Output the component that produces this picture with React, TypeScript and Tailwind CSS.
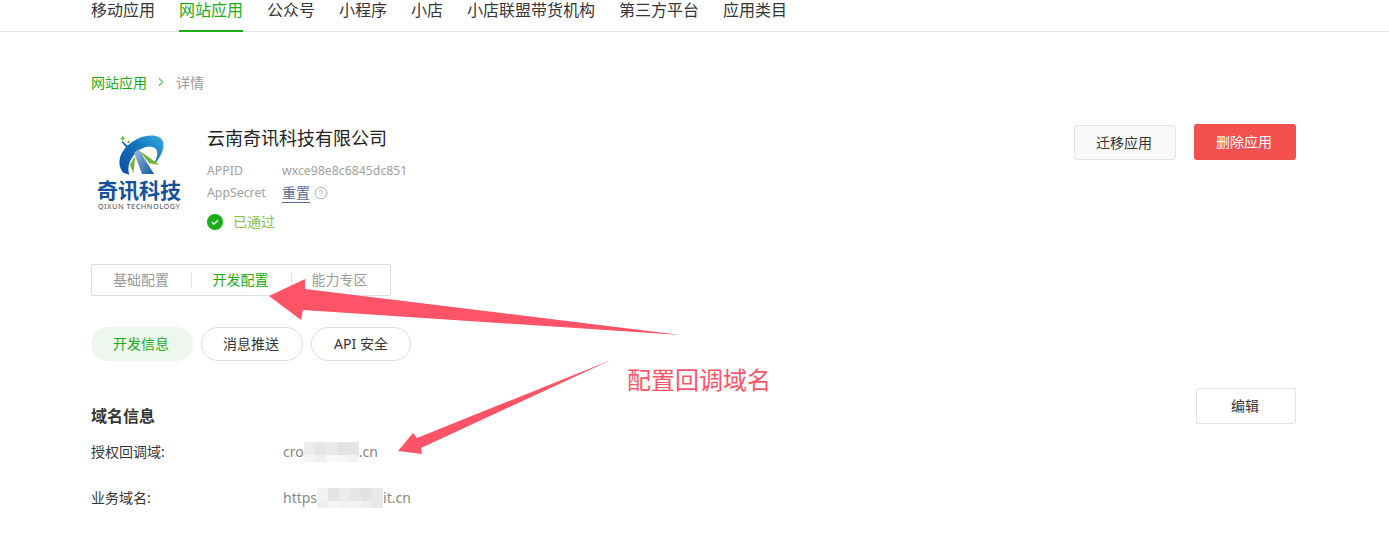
import { ChevronRight, CircleHelp } from 'lucide-react';

const navItems = ['移动应用', '网站应用', '公众号', '小程序', '小店', '小店联盟带货机构', '第三方平台', '应用类目'];

// blurred-out part of a domain
function Mosaic({ cells }: { cells: string[][] }) {
  return (
    <span className="inline-flex flex-col mt-[2px]">
      {cells.map((row, i) => (
        <span key={i} className={i === 0 ? 'flex h-[13px]' : 'flex h-[7px]'}>
          {row.map((c, j) => (
            <span key={j} className={`${c} w-[11px]`} />
          ))}
        </span>
      ))}
    </span>
  );
}

function Logo() {
  return (
    <div className="w-[96px] mt-[7px] flex flex-col items-center">
      <svg width="96" height="50" viewBox="0 0 288 150">
        <defs>
          <linearGradient id="ring" x1="0" y1="1" x2="1" y2="0">
            <stop offset="0" stopColor="#0a4f9f" />
            <stop offset="0.55" stopColor="#1270bd" />
            <stop offset="1" stopColor="#35aee0" />
          </linearGradient>
          <linearGradient id="road" x1="0" y1="0" x2="1" y2="1">
            <stop offset="0" stopColor="#9dbcd4" />
            <stop offset="1" stopColor="#0c5aa6" />
          </linearGradient>
        </defs>
        <g transform="translate(57 3)">
          <path
            fill="url(#ring)"
            d="M40 122C18 96 28 56 66 30C100 6 146 4 158 26C166 46 154 74 130 100C146 70 146 52 130 46C110 38 84 52 68 74C56 92 52 108 58 128Z"
          />
          <path fill="#1270bd" d="M34 30L38 28L58 46L52 50Z" />
          <path fill="url(#road)" d="M72 62L86 52L132 126L96 126Z" />
          <path fill="#6ab42d" d="M60 98L76 72L70 124Z" />
          <path fill="#6ab42d" d="M88 56L148 98L118 94Z" />
          <path fill="#6ab42d" d="M38 10L41 17L48 19L41 21L38 28L35 21L28 19L35 17Z" />
          <circle cx="56" cy="30" r="3.5" fill="#6ab42d" />
        </g>
      </svg>
      <div className="text-[21px] leading-[20px] font-bold text-[#14509c] -mt-[1px] whitespace-nowrap">奇讯科技</div>
      <div className="text-[7.4px] leading-[8px] tracking-[0.45px] font-medium text-[#6b6b6b] mt-[2px] whitespace-nowrap">QIXUN TECHNOLOGY</div>
    </div>
  );
}

function App() {
  return (
    <div className="relative h-[550px] w-[1389px] overflow-hidden bg-white font-['Noto_Sans','Noto_Sans_CJK_SC',sans-serif] text-[#353535]">
      {/* Top nav, scrolled so the text sits high */}
      <div className="h-[32px] border-b border-[#e2e2e2] pl-[91px] flex gap-6 text-[16px]">
        {navItems.map((item) =>
          item === '网站应用' ? (
            <div key={item} className="h-[32px] leading-[20px] text-[#1aad19] border-b-2 border-[#1aad19]">
              {item}
            </div>
          ) : (
            <div key={item} className="h-[32px] leading-[20px]">
              {item}
            </div>
          )
        )}
      </div>

      <div className="pl-[91px] pr-[93px]">
        {/* Breadcrumb */}
        <div className="mt-[41px] h-5 pb-[2px] flex items-center text-[14px] text-[#9a9a9a]">
          <span className="text-[#1aad19]">网站应用</span>
          <ChevronRight size={14} className="text-[#6fc26e] ml-[7px] mr-[8px]" />
          <span>详情</span>
        </div>

        {/* App head */}
        <div className="mt-[31px] flex justify-between">
          <div className="flex gap-5">
            <Logo />
            <div>
              <div className="text-[18px] leading-[28px] text-[#222]">云南奇讯科技有限公司</div>
              <div className="mt-[8px] h-[22px] flex items-center text-[12.3px] text-[#a0a0a0]">
                <span className="w-[75px]">APPID</span>
                <span>wxce98e8c6845dc851</span>
              </div>
              <div className="h-[22px] flex items-center text-[12.3px] text-[#a0a0a0]">
                <span className="w-[75px]">AppSecret</span>
                <span className="text-[14px] leading-[18px] text-[#576b95] border-b border-[#576b95]">重置</span>
                <CircleHelp size={14} strokeWidth={1.5} className="ml-1 text-[#aaa]" />
              </div>
              <div className="mt-[7px] h-[22px] flex items-center text-[14px] text-[#8bbf4a]">
                <svg width="16" height="16" viewBox="0 0 16 16" className="mr-[10px]">
                  <circle cx="8" cy="8" r="8" fill="#1aad19" />
                  <path d="M5 8.2L7 10L11 6.2" fill="none" stroke="#fff" strokeWidth="1.4" />
                </svg>
                <span className="-mt-[2px]">已通过</span>
              </div>
            </div>
          </div>
          <div className="flex items-start gap-[18px] text-[14px]">
            <button className="mt-[1px] w-[102px] h-[35px] pr-[2px] rounded-[3px] border border-[#e4e4e4] bg-[#f9f9f9]">迁移应用</button>
            <button className="w-[102px] h-[36px] pb-[2px] pr-[2px] rounded-[3px] bg-[#f4504f] text-white">删除应用</button>
          </div>
        </div>

        {/* Section tabs */}
        <div className="mt-[31px] w-[300px] h-[32px] rounded-[2px] border border-[#dedede] flex items-center text-[14px] text-[#9a9a9a]">
          <div className="w-[100px] h-[14px] pr-[1px] flex items-center justify-center border-r border-[#e2e2e2]"><span className="-mt-[2px]">基础配置</span></div>
          <div className="w-[100px] h-[14px] pr-[2px] flex items-center justify-center border-r border-[#e2e2e2] text-[#1aad19]"><span className="-mt-[2px]">开发配置</span></div>
          <div className="w-[98px] h-[14px] pr-[3px] flex items-center justify-center"><span className="-mt-[2px]">能力专区</span></div>
        </div>

        {/* Sub tabs */}
        <div className="mt-[31px] flex gap-2 text-[14px]">
          <div className="w-[102px] h-[34px] pb-[2px] pr-[2px] rounded-[17px] bg-[#edf7ed] text-[#1aad19] flex items-center justify-center">开发信息</div>
          <div className="w-[102px] h-[34px] pb-[2px] pr-[2px] rounded-[17px] border border-[#dedede] flex items-center justify-center">消息推送</div>
          <div className="w-[100px] h-[34px] pb-[2px] rounded-[17px] border border-[#dedede] flex items-center justify-center">API 安全</div>
        </div>

        {/* Domain info */}
        <div className="mt-[27px] h-10 flex items-end justify-between">
          <h3 className="text-[16px] leading-6 font-bold">域名信息</h3>
          <button className="self-start w-[100px] h-[36px] pb-[2px] pr-[2px] rounded-[2px] border border-[#e4e4e4] text-[14px]">编辑</button>
        </div>
        <div className="mt-[1px] h-[46px] pb-[2px] flex items-center text-[14px]">
          <span className="w-[192px]">授权回调域:</span>
          <span className="flex items-center text-[#888]">
            cro
            <Mosaic
              cells={[
                ['bg-[#ececec]', 'bg-[#e6e6e6]', 'bg-[#eaeaea]', 'bg-[#e2e2e2]', 'bg-[#e4e4e4]'],
                ['bg-[#f4f4f4]', 'bg-[#eeeeee]', 'bg-[#f8f9fb]', 'bg-[#f6f6f8]', 'bg-[#f2f2f2]'],
              ]}
            />
            .cn
          </span>
        </div>
        <div className="h-[46px] pb-[2px] flex items-center text-[14px]">
          <span className="w-[192px]">业务域名:</span>
          <span className="flex items-center text-[#888]">
            https
            <Mosaic
              cells={[
                ['bg-[#f2f2f2]', 'bg-[#e4e4e4]', 'bg-[#ececec]', 'bg-[#e6e6e6]', 'bg-[#e2e2e2]', 'bg-[#e8e8e8]'],
                ['bg-[#eeeeee]', 'bg-[#f6f6f6]', 'bg-[#f2f2f2]', 'bg-[#f4f4f4]', 'bg-[#eeeeee]', 'bg-[#e8e8e8]'],
              ]}
            />
            it.cn
          </span>
        </div>
      </div>

      {/* Screenshot annotation on top of the page */}
      <svg className="absolute inset-0 pointer-events-none" width="1389" height="550">
        <polygon fill="#ff5468" points="269,296 305,279 305,289 681,335 303,310 301,320" />
        <polygon fill="#ff5468" points="398,451 413,433 417,438 611,360 421,448 422,454" />
      </svg>
      <div className="absolute left-[627px] top-[364px] text-[24px] leading-[32px] text-[#ff5468] whitespace-nowrap">配置回调域名</div>
    </div>
  );
}

export default App;
